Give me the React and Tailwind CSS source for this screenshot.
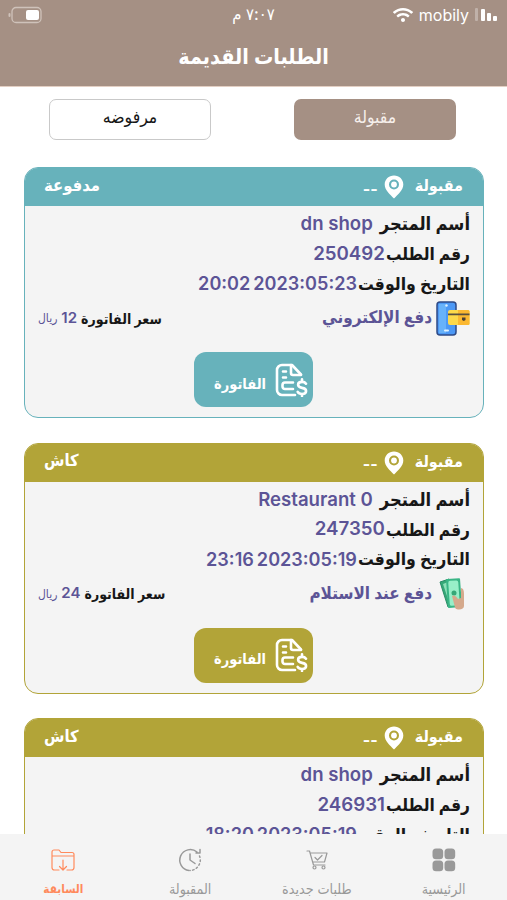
import { FaWifi } from 'react-icons/fa'

const orders = [
  { id: '250492', shop: 'dn shop', date: '2023:05:23', time: '20:02', price: 12, online: true },
  { id: '247350', shop: 'Restaurant 0', date: '2023:05:19', time: '23:16', price: 24, online: false },
  { id: '246931', shop: 'dn shop', date: '2023:05:19', time: '18:20', price: 24, online: false },
]

function PinIcon() {
  return (
    <svg width="20" height="24" viewBox="0 0 20 24" className="shrink-0">
      <path fill="white" fillRule="evenodd" d="M10 .5C4.700.500.700 4.400.700 9.400c0 5.700 5.200 9.600 9.300 14.100 4.100-4.500 9.300-8.400 9.300-14.100C19.300 4.400 15.300.500 10 .500ZM10 4.500a5 5 0 1 1 0 10 5 5 0 0 1 0-10Z" />
      <circle cx="10" cy="9.500" r="2.900" fill="white" />
    </svg>
  )
}

function InvoiceIcon() {
  return (
    <svg width="33" height="34" viewBox="0 0 33 34" fill="none" stroke="white" strokeWidth="2.600" strokeLinecap="round" strokeLinejoin="round">
      <path d="M20 32H7a5 5 0 0 1-5-5V7a5 5 0 0 1 5-5h10l9 9.500" />
      <path d="M16 2v8a2 2 0 0 0 2 2h8" />
      <path d="M8 8.500h3M8 14.500h3" />
      <path d="M18 19.500h-8a2.500 2.500 0 0 0-2.500 2.500v1.500a2.500 2.500 0 0 0 2.500 2.500h8" />
      <path d="M31 20.700c-.800-1.200-2.300-1.800-4-1.800-2.500 0-3.900 1.200-3.900 2.900s1.600 2.700 3.900 3.100c2.500.400 4.100 1.300 4.100 3.200s-1.600 2.900-4.100 2.900c-1.900 0-3.500-.600-4.300-2.100M27 16.300v2.300M27 31v2" />
    </svg>
  )
}

function PhonePayIcon() {
  return (
    <svg width="35" height="35" viewBox="0 0 35 35">
      <rect x="2" y="1" width="19" height="33" rx="3" fill="#4c98f5" stroke="#2e4a86" strokeWidth="1.500" />
      <path d="M4 3h7v29H4z" fill="#67b2fa" />
      <circle cx="11.500" cy="4.500" r="1.200" fill="#dff2ff" />
      <rect x="9" y="28.500" width="5" height="2" rx="1" fill="#dff2ff" />
      <path d="M13 11a2 2 0 0 1 2-2h18a1.500 1.500 0 0 1 1.500 1.500v12A1.500 1.500 0 0 1 33 24H15a2 2 0 0 1-2-2z" fill="#fdd94a" />
      <path d="M23 9h10a1.500 1.500 0 0 1 1.500 1.500v12A1.500 1.500 0 0 1 33 24H23z" fill="#fbb831" />
      <path d="M13 12.500h21.500v1.700H13z" fill="#5a5040" />
      <path d="M27 16.500h3.500v2.500l-1.700 1-1.800-1z" fill="#4d4033" />
    </svg>
  )
}

function CashIcon() {
  return (
    <svg width="26" height="33" viewBox="0 0 26 33">
      <path d="M1 5l9-3 5 25-6 3z" fill="#35a877" stroke="#2a8d67" />
      <path d="M4 7l5-2 4 22-2 1z" fill="#8de0b8" />
      <rect x="8" y="1.500" width="14" height="29" rx="1" fill="#39b585" transform="rotate(-4 16 16)" />
      <rect x="10" y="3.500" width="10" height="25" rx="2" fill="#98efc8" transform="rotate(-4 16 16)" />
      <circle cx="15" cy="16" r="2.500" fill="#35a877" />
      <path d="M13 19c2-1.500 4 0 6 3l3-1V11c2 0 3 2 3 6v12c0 2-2 3.500-5 3.500s-4-1-4.500-4z" fill="#d5a98c" />
    </svg>
  )
}

function OrderCard({ order }) {
  const bg = order.online ? 'bg-[#67b2bb]' : 'bg-[#b2a438]'
  const border = order.online ? 'border-[#67b2bb]' : 'border-[#b2a438]'
  return (
    <div className={`h-[251px] shrink-0 rounded-[14px] border overflow-hidden bg-[#f4f4f4] ${border}`}>
      <div className={`h-[38px] flex items-center pr-5 pl-[19px] text-white text-[16px] font-bold ${bg}`}>
        <span className="-mt-1">مقبولة</span>
        <span className="mr-[11px]"><PinIcon /></span>
        <span className="mr-[6px] mt-[3px]">--</span>
        <span className="mr-auto -mt-1 text-[16.500px]">{order.online ? 'مدفوعة' : 'كاش'}</span>
      </div>
      <div className="px-[13px] font-bold text-[#171717]">
        <div className="h-[30px] mt-[3px] flex items-center">
          <span className="text-[18.200px]">أسم المتجر</span>
          <span dir="ltr" className="mr-[7px] text-[18.600px] text-[#5c5496] font-semibold">{order.shop}</span>
        </div>
        <div className="h-[30px] flex items-center">
          <span className="text-[17.200px]">رقم الطلب</span>
          <span dir="ltr" className="mr-[1px] text-[18.700px] text-[#5c5496] font-semibold">{order.id}</span>
        </div>
        <div className="h-[30px] flex items-center">
          <span className="text-[17.500px]">التاريخ والوقت</span>
          <span dir="ltr" className="mr-[1px] text-[18.100px] text-[#5c5496] font-semibold">{order.date}</span>
          <span dir="ltr" className="mr-[3px] text-[18.100px] text-[#5c5496] font-semibold">{order.time}</span>
        </div>
        <div className="h-[38px] flex items-center">
          <span className="w-[36px] flex justify-center">{order.online ? <PhonePayIcon /> : <CashIcon />}</span>
          <span className="mr-[2px] text-[#5c5496] text-[17px]">{order.online ? 'دفع الإلكتروني' : 'دفع عند الاستلام'}</span>
          <span className="mr-auto text-[14px]">سعر الفاتورة</span>
          <span className="mr-[4px] text-[15px] text-[#5c5496] font-semibold">{order.price}</span>
          <span className="mr-[4px] text-[12px] font-normal text-[#5c5496]">ريال</span>
        </div>
      </div>
      <div className={`mt-[15px] mr-[170px] w-[119px] h-[55px] rounded-[12px] flex items-center pr-[5px] text-white text-[14.500px] font-bold ${bg}`}>
        <InvoiceIcon />
        <span className="mr-[9px] mt-2">الفاتورة</span>
      </div>
    </div>
  )
}

function NavItem({ label, active, children }) {
  return (
    <div className={`flex-1 flex flex-col items-center pt-[13px] ${active ? 'text-[#ff8a5c] text-[11.700px] font-bold' : 'text-[#999999] text-[14.200px]'}`}>
      <svg width="26" height="26" viewBox="0 0 26 26" fill="none" stroke="currentColor" strokeWidth="1.200" strokeLinecap="round" strokeLinejoin="round">
        {children}
      </svg>
      <span className="mt-[6px] leading-[20px]">{label}</span>
    </div>
  )
}

export default function App() {
  return (
    <div dir="rtl" className="w-[507px] h-[900px] flex flex-col overflow-hidden bg-white whitespace-nowrap font-['Inter','DejaVu_Sans_Condensed','DejaVu_Sans',sans-serif]">
      <header className="h-[87px] shrink-0 bg-[#a59084] text-white border-b border-[#e3cfc3]">
        <div className="h-[29px] grid grid-cols-3 items-center px-[8px]">
          <div className="flex items-center">
            <svg width="24" height="14" viewBox="0 0 24 14" fill="white">
              <rect x="0" y="0" width="3" height="13" rx="1" opacity=".3" />
              <rect x="6" y="1" width="4" height="12" rx="1" />
              <rect x="12" y="5" width="4" height="8" rx="1" />
              <rect x="18" y="8" width="4" height="5" rx="1" />
            </svg>
            <span className="mr-[6px] text-[16px]">mobily</span>
            <FaWifi className="mr-[6px]" size={20} />
          </div>
          <div className="text-center text-[16.500px]">٧:٠٧ م</div>
          <div className="flex justify-end">
            <svg width="34" height="18" viewBox="0 0 34 18" fill="none">
              <rect x="4" y="1.500" width="29" height="15" rx="4" stroke="#cfc2ba" strokeWidth="1.300" />
              <rect x="18" y="4" width="13" height="10" rx="2" fill="white" />
              <path d="M1.500 8v2" stroke="#cfc2ba" strokeWidth="2" strokeLinecap="round" />
            </svg>
          </div>
        </div>
        <h1 className="h-[54px] flex items-center justify-center text-[21.400px] font-bold">الطلبات القديمة</h1>
      </header>

      <main className="flex-1 min-h-0 overflow-hidden">
        <div className="flex justify-between pt-[12px] pr-[51px] pl-[49px] text-[17.500px]">
          <button className="w-[162px] h-[41px] pb-1 rounded-[7px] bg-[#a59084] text-[#f6efeb]">مقبولة</button>
          <button className="w-[162px] h-[41px] pb-1 rounded-[7px] border border-[#c9c9c9] text-[#171717]">مرفوضه</button>
        </div>
        <div className="flex flex-col gap-[24.500px] mt-[27px] pl-[24px] pr-[23px]">
          {orders.map((order) => <OrderCard key={order.id} order={order} />)}
        </div>
      </main>

      <nav className="h-[66px] shrink-0 flex bg-[#f4f4f4]">
        <NavItem label="الرئيسية">
          <g fill="currentColor" stroke="none">
            <rect x="1.500" y="1.500" width="10.700" height="10.700" rx="3.500" />
            <rect x="13.500" y="1.500" width="10.700" height="10.700" rx="3.500" />
            <rect x="1.500" y="13.500" width="10.700" height="10.700" rx="3.500" />
            <rect x="13.500" y="13.500" width="10.700" height="10.700" rx="3.500" />
          </g>
        </NavItem>
        <NavItem label="طلبات جديدة">
          <path d="M3 4h2.500l4 14H21M6.500 6H23l-2.500 9H9M11 10.500l2.500 2.500L18 8.500" />
          <circle cx="10.500" cy="20.500" r="1.500" />
          <circle cx="19.500" cy="20.500" r="1.500" />
        </NavItem>
        <NavItem label="المقبولة">
          <path strokeWidth="1.500" d="M20 5A10.500 10.500 0 1 0 12 23.500M19 6h4V2.500M13 7v6l5 3.500" />
          <path strokeWidth="1.500" strokeDasharray="1.500 2.500" d="M22.500 9A10.500 10.500 0 0 1 13 23.500" />
        </NavItem>
        <NavItem label="السابقة" active>
          <path d="M9 23H4.500A2.500 2.500 0 0 1 2 20.500V5a2 2 0 0 1 2-2h5l2 2.500h11A2 2 0 0 1 24 7.500v13a2.500 2.500 0 0 1-2.500 2.500H17M2 9h22M13 13v10M9.500 19.500 13 23l3.500-3.500" />
        </NavItem>
      </nav>
    </div>
  )
}
